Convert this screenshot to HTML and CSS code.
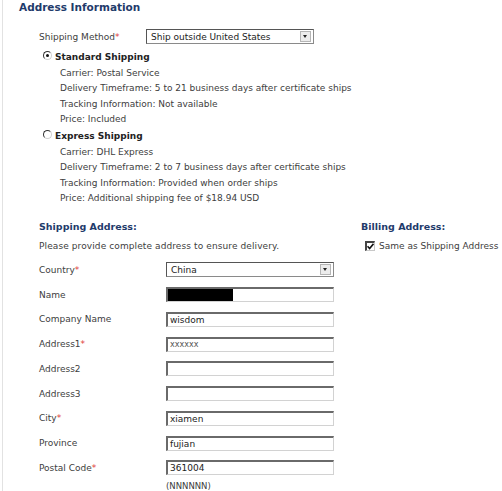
FILE: index.html
```html
<!DOCTYPE html>
<html lang="en">

<head>
    <meta charset="UTF-8">
    <title>Address Information</title>
    <link rel="stylesheet" href="styles.css">
</head>

<body>
    <div class="page">
        <h1 class="title">Address Information</h1>

        <div class="method-row">
            <div class="method-label">Shipping Method<span class="req">*</span></div>
            <div class="select">
                <span>Ship outside United States</span>
                <span class="select-btn"></span>
            </div>
        </div>

        <!-- shipping options -->
        <div class="option">
            <span class="radio checked"></span>
            <span class="option-name">Standard Shipping</span>
        </div>
        <div class="details">
            <div>Carrier: Postal Service</div>
            <div>Delivery Timeframe: 5 to 21 business days after certificate ships</div>
            <div>Tracking Information: Not available</div>
            <div>Price: Included</div>
        </div>

        <div class="option">
            <span class="radio"></span>
            <span class="option-name">Express Shipping</span>
        </div>
        <div class="details">
            <div>Carrier: DHL Express</div>
            <div>Delivery Timeframe: 2 to 7 business days after certificate ships</div>
            <div>Tracking Information: Provided when order ships</div>
            <div>Price: Additional shipping fee of $18.94 USD</div>
        </div>

        <div class="address-cols">
            <div class="shipping-col">
                <h2 class="section-title">Shipping Address:</h2>
                <div class="note">Please provide complete address to ensure delivery.</div>

                <div class="form-grid">
                    <div class="label">Country<span class="req">*</span></div>
                    <div class="select">
                        <span>China</span>
                        <span class="select-btn"></span>
                    </div>

                    <div class="label">Name</div>
                    <div class="field"><span class="blackout"></span></div>

                    <div class="label">Company Name</div>
                    <div class="field">wisdom</div>

                    <div class="label">Address1<span class="req">*</span></div>
                    <div class="field small">xxxxxx</div>

                    <div class="label">Address2</div>
                    <div class="field"></div>

                    <div class="label">Address3</div>
                    <div class="field"></div>

                    <div class="label">City<span class="req">*</span></div>
                    <div class="field">xiamen</div>

                    <div class="label">Province</div>
                    <div class="field">fujian</div>

                    <div class="label">Postal Code<span class="req">*</span></div>
                    <div class="field">361004</div>

                    <div></div>
                    <div class="hint">(NNNNNN)</div>
                </div>
            </div>

            <div class="billing-col">
                <h2 class="section-title">Billing Address:</h2>
                <div class="same-row">
                    <span class="checkbox">
                        <svg width="7" height="7" viewBox="0 0 7 7">
                            <path d="M0.5 3.2 L2.6 5.5 L6.5 0.8" fill="none" stroke="#111" stroke-width="1.6"/>
                        </svg>
                    </span>
                    <span>Same as Shipping Address</span>
                </div>
            </div>
        </div>
    </div>
</body>

</html>
```

FILE: styles.css
```css
body {
    margin: 0;
    background-color: #fff;
    font-family: "DejaVu Sans", Verdana, sans-serif;
    font-size: 9px;
    color: #404040;
    overflow: hidden;
}

.page {
    margin-left: 2px;
    border-left: 1px solid #e2e2e2;
    height: 491px;
}

.title {
    margin: 0;
    padding-left: 16px;
    font-size: 10.5px;
    line-height: 14px;
    color: #1f3b6b;
}

.req {
    color: #e0403a;
}

.method-row {
    display: flex;
    align-items: center;
    margin-top: 15px;
    padding-left: 36px;
    height: 15px;
}

.method-label {
    width: 107px;
}

.select {
    display: flex;
    align-items: center;
    justify-content: space-between;
    box-sizing: border-box;
    width: 168px;
    height: 15px;
    padding: 0 2px 0 4px;
    border: 1px solid #8a8a8a;
    border-top-color: #555;
    border-left-color: #555;
    background-color: #fff;
    color: #222;
}

.select-btn {
    position: relative;
    width: 9px;
    height: 9px;
    border: 1px solid #b5b5b5;
    background-color: #ececec;
}

.select-btn::after {
    content: "";
    position: absolute;
    left: 2px;
    top: 3px;
    border-left: 2.5px solid transparent;
    border-right: 2.5px solid transparent;
    border-top: 3px solid #222;
}

.option {
    display: flex;
    align-items: center;
    height: 14px;
    margin-top: 6px;
    padding-left: 40px;
    font-weight: bold;
    color: #222;
}

.option + .details + .option {
    margin-top: 1.5px;
}

.radio {
    box-sizing: border-box;
    width: 9px;
    height: 9px;
    margin-right: 3px;
    margin-top: -4px;
    border-radius: 50%;
    border: 1px solid #d0d0d0;
    border-top-color: #333;
    border-left-color: #333;
    position: relative;
}

.radio.checked::after {
    content: "";
    position: absolute;
    left: 2px;
    top: 2px;
    width: 3px;
    height: 3px;
    border-radius: 50%;
    background-color: #111;
}

.details {
    padding-left: 57px;
    margin-top: 1.5px;
    line-height: 15.5px;
}

.address-cols {
    display: flex;
    margin-top: 13.5px;
    padding-left: 36px;
}

.shipping-col {
    width: 319px;
}

.section-title {
    margin: 0;
    font-size: 9.5px;
    line-height: 14px;
    color: #1f3b6b;
}

.note {
    margin-top: 5px;
    line-height: 14px;
    letter-spacing: 0.1px;
}

.form-grid {
    display: grid;
    grid-template-columns: 127px 168px;
    grid-auto-rows: 24.75px;
    align-items: center;
    margin-top: 4.5px;
}

.form-grid .hint {
    align-self: start;
    margin-top: 1px;
    font-size: 8.5px;
}

.field {
    box-sizing: border-box;
    height: 15px;
    padding-left: 2px;
    border: 1px solid #d2d2d2;
    border-top: 2px solid #6a6a6a;
    border-left: 2px solid #6a6a6a;
    line-height: 12px;
    color: #222;
    overflow: hidden;
}

.field.small {
    font-size: 8px;
    color: #555;
}

.blackout {
    display: block;
    width: 65px;
    height: 13px;
    margin-left: -2px;
    margin-top: -1px;
    background-color: #000;
}

.billing-col {
    padding-left: 3px;
}

.same-row {
    display: flex;
    align-items: center;
    margin-top: 5px;
    height: 14px;
    padding-left: 4px;
}

.checkbox {
    display: flex;
    align-items: center;
    justify-content: center;
    box-sizing: border-box;
    width: 10px;
    height: 10px;
    margin-right: 4px;
    border: 1px solid #c8c8c8;
    border-top: 2px solid #444;
    border-left: 2px solid #444;
}
```
